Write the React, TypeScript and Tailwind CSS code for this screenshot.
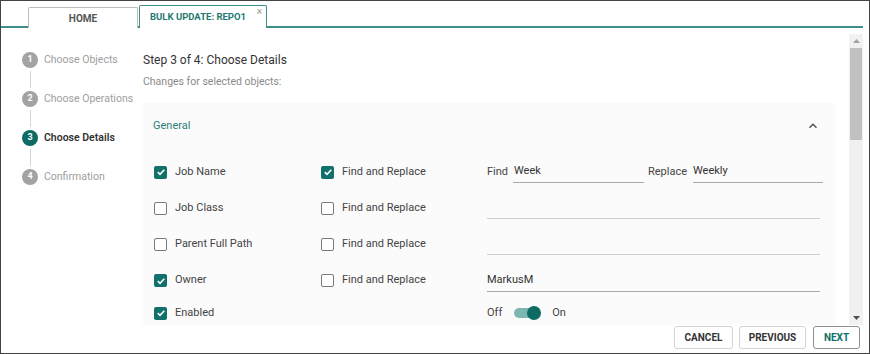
import { useState } from "react";

const TEAL = "#11706a";

const STEPS = [
  { n: 1, label: "Choose Objects" },
  { n: 2, label: "Choose Operations" },
  { n: 3, label: "Choose Details" },
  { n: 4, label: "Confirmation" },
];

function Checkbox({ checked }: { checked: boolean }) {
  if (checked) {
    return (
      <span className="w-[13px] h-[13px] rounded-[2px] bg-[#11706a] flex items-center justify-center shrink-0">
        <svg width="10" height="10" viewBox="0 0 10 10">
          <path d="M1.8 5.2 L4 7.3 L8.3 2.7" fill="none" stroke="#fff" strokeWidth="1.6" />
        </svg>
      </span>
    );
  }
  return <span className="w-[13px] h-[13px] rounded-[2px] border-[1.5px] border-[#7a7a7a] bg-white shrink-0" />;
}

function Stepper() {
  return (
    <div className="w-[142px] shrink-0 pl-[21px] pt-[24px]">
      {STEPS.map((s, i) => {
        const active = s.n === 3;
        return (
          <div key={s.n}>
            <div className="flex items-center h-[16px]">
              <span
                className={`w-[16px] h-[16px] rounded-full flex items-center justify-center text-[9px] font-bold text-white ${
                  active ? "bg-[#0e6b63]" : "bg-[#a3a3a3]"
                }`}
              >
                {s.n}
              </span>
              <span
                className={`ml-[6px] text-[10.5px] ${active ? "font-semibold text-[#333]" : "text-[#9e9e9e]"}`}
              >
                {s.label}
              </span>
            </div>
            {i < STEPS.length - 1 && (
              <div className="w-[16px] flex justify-center py-[3px]">
                <div className="w-px h-[17px] bg-[#d6d6d6]" />
              </div>
            )}
          </div>
        );
      })}
    </div>
  );
}

function Row({
  h,
  label,
  checked,
  fr,
  children,
}: {
  h: string;
  label: string;
  checked: boolean;
  fr?: boolean;
  children?: React.ReactNode;
}) {
  return (
    <div className={`flex items-center ${h}`}>
      <div className="w-[167px] flex items-center gap-[8px] shrink-0">
        <Checkbox checked={checked} />
        <span className="text-[11px] text-[#444]">{label}</span>
      </div>
      <div className="w-[166px] flex items-center gap-[8px] shrink-0">
        {fr !== undefined && (
          <>
            <Checkbox checked={fr} />
            <span className="text-[11px] text-[#444]">Find and Replace</span>
          </>
        )}
      </div>
      <div className="flex-1 flex items-center">{children}</div>
    </div>
  );
}

export default function App() {
  const [enabled] = useState(true);
  return (
    <div
      className="w-[870px] h-[354px] border border-[#444] bg-white flex flex-col overflow-hidden"
      style={{ fontFamily: "Roboto, 'Liberation Sans', sans-serif" }}
    >
      {/* tabs */}
      <div className="h-[27px] shrink-0 flex items-end pl-[27px] mr-[6px] border-b-2 border-[#3f8f89]">
        <div className="w-[110px] h-[21px] -mb-[2px] border border-b-0 border-[#bdbdbd] rounded-t-[2px] flex items-center justify-center text-[10px] font-bold text-[#555] bg-white">
          HOME
        </div>
        <div className="relative ml-px w-[128px] h-[23px] -mb-[2px] border-[1.5px] border-b-0 border-[#3f8f89] rounded-t-[2px] bg-white flex items-center justify-center pr-[10px] text-[9.5px] font-bold text-[#1f7a72]">
          BULK UPDATE: REPO1
          <span className="absolute right-[4px] top-0 text-[10px] leading-[12px] font-normal text-[#999]">×</span>
        </div>
      </div>

      {/* main */}
      <div className="flex-1 flex min-h-0">
        <Stepper />
        <div className="flex-1 min-w-0 pt-[24px] overflow-hidden">
          <div className="text-[12px] leading-[16px] text-[#333]">Step 3 of 4: Choose Details</div>
          <div className="mt-[7px] text-[10.5px] leading-[14px] text-[#8a8a8a]">Changes for selected objects:</div>
          <div className="mt-[14px] mr-[13px] bg-[#fbfbfb] pl-[11px] pr-[10px]">
            <div className="h-[46px] flex items-center justify-between -ml-[1px]">
              <span className="text-[11px] text-[#2b8078]">General</span>
              <svg width="12" height="12" viewBox="0 0 12 12" className="mr-[7px]">
                <path d="M2.5 7.8 L6 4.3 L9.5 7.8" fill="none" stroke="#555" strokeWidth="1.5" />
              </svg>
            </div>
            <div className="pt-[5px]">
              <Row h="h-[36px]" label="Job Name" checked fr>
                <span className="text-[11px] text-[#444] w-[26px]">Find</span>
                <div className="w-[131px] h-[22px] flex items-center border-b border-[#a8a8a8] text-[11px] text-[#333] pl-px">
                  Week
                </div>
                <span className="ml-[4px] text-[11px] text-[#444] w-[45px]">Replace</span>
                <div className="w-[130px] h-[22px] flex items-center border-b border-[#a8a8a8] text-[11px] text-[#333]">
                  Weekly
                </div>
              </Row>
              <Row h="h-[36px]" label="Job Class" checked={false} fr={false}>
                <div className="w-[333px] h-[20px] border-b border-[#cfcfcf] mt-[2px]" />
              </Row>
              <Row h="h-[36px]" label="Parent Full Path" checked={false} fr={false}>
                <div className="w-[333px] h-[20px] border-b border-[#cfcfcf] mt-[2px]" />
              </Row>
              <Row h="h-[37px]" label="Owner" checked fr={false}>
                <div className="w-[333px] h-[22px] flex items-center border-b border-[#a8a8a8] text-[11px] text-[#333] mt-[1px]">
                  MarkusM
                </div>
              </Row>
              <Row h="h-[28px]" label="Enabled" checked>
                <span className="text-[11px] text-[#444]">Off</span>
                <div className="relative ml-[12px] w-[27px] h-[14px] flex items-center">
                  <div className="w-[26px] h-[10px] rounded-full bg-[#7db5b0]" />
                  <div
                    className={`absolute top-0 w-[14px] h-[14px] rounded-full bg-[#0e6b63] ${enabled ? "right-0" : "left-0"}`}
                  />
                </div>
                <span className="ml-[11px] text-[11px] text-[#444]">On</span>
              </Row>
            </div>
          </div>
        </div>

        {/* scrollbar */}
        <div className="w-[14px] shrink-0 mr-[6px] mt-[6px] bg-[#f1f1f1] flex flex-col">
          <div className="h-[14px] flex items-center justify-center">
            <svg width="7" height="4" viewBox="0 0 7 4">
              <path d="M0 4 L3.5 0 L7 4 Z" fill="#a3a3a3" />
            </svg>
          </div>
          <div className="mx-[1px] h-[92px] bg-[#c1c1c1]" />
          <div className="flex-1" />
          <div className="h-[14px] flex items-center justify-center">
            <svg width="7" height="4" viewBox="0 0 7 4">
              <path d="M0 0 L7 0 L3.5 4 Z" fill="#505050" />
            </svg>
          </div>
        </div>
      </div>

      {/* footer */}
      <div className="h-[28px] shrink-0 flex items-start justify-end gap-[6px] pr-[9px] pt-[1px]">
        <button className="w-[59px] h-[23px] border border-[#d4d4d4] rounded-[3px] text-[10px] font-bold text-[#333] bg-white">
          CANCEL
        </button>
        <button className="w-[67px] h-[23px] border border-[#d4d4d4] rounded-[3px] text-[10px] font-bold text-[#333] bg-white">
          PREVIOUS
        </button>
        <button
          className="ml-px w-[47px] h-[23px] border border-[#8f8f8f] rounded-[3px] text-[10px] font-bold bg-white"
          style={{ color: TEAL }}
        >
          NEXT
        </button>
      </div>
    </div>
  );
}
